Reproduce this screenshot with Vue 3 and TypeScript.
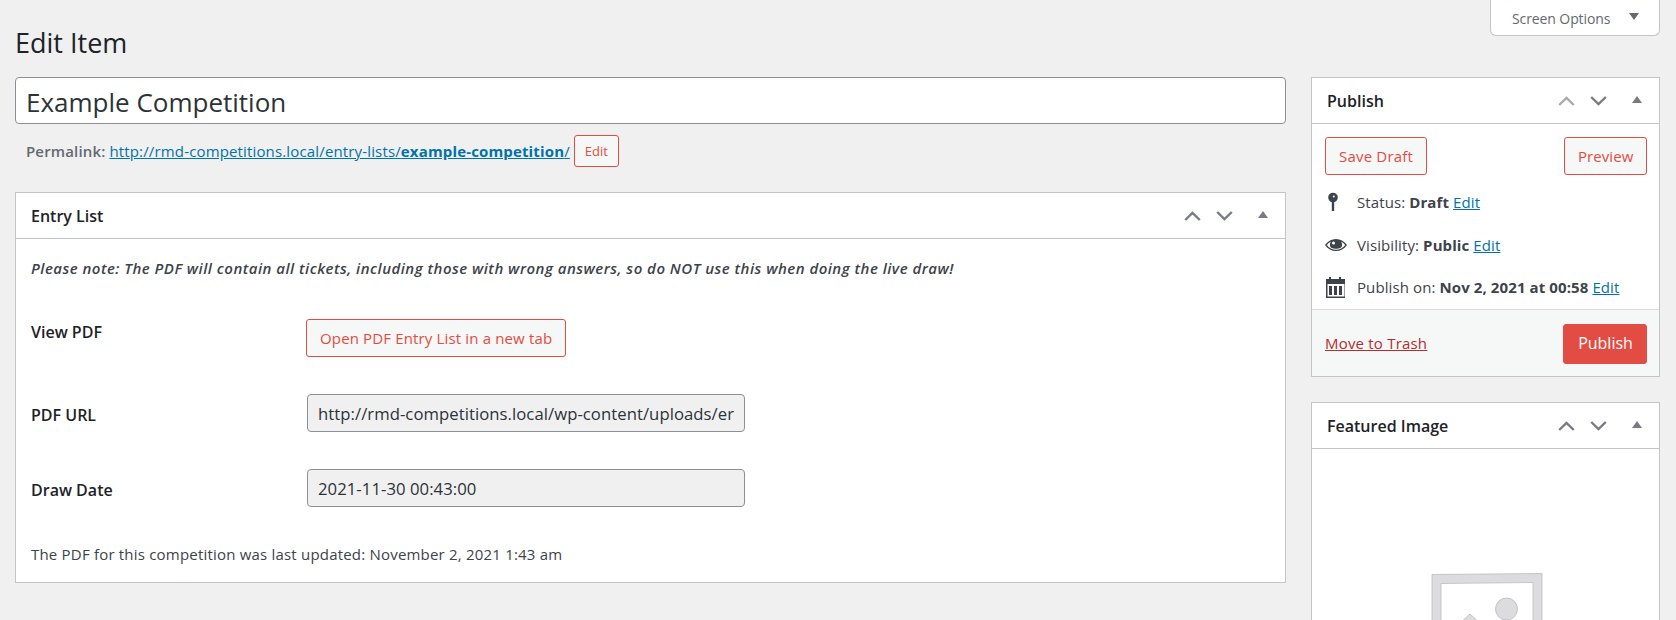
<script setup lang="ts">
const fields = [
  { label: 'PDF URL', value: 'http://rmd-competitions.local/wp-content/uploads/er' },
  { label: 'Draw Date', value: '2021-11-30 00:43:00' },
]
</script>

<template>
  <div class="page">
    <header class="top">
      <h1>Edit Item</h1>
      <div class="screen-tab">
        <span>Screen Options</span>
        <svg class="tri" width="10" height="7" viewBox="0 0 10 7"><path d="M0 0h10L5 7z" /></svg>
      </div>
    </header>
    <div class="columns">
      <main class="main">
        <div class="title-input">Example Competition</div>
        <div class="permalink">
          <strong>Permalink:</strong>
          <a href="#">http://rmd-competitions.local/entry-lists/<b>example-competition</b>/</a>
          <button class="btn small">Edit</button>
        </div>
        <section class="box entry">
          <div class="box-head">
            <h2>Entry List</h2>
            <div class="controls">
              <svg width="17" height="10" viewBox="0 0 17 10"><path class="chev" d="M1.2 9L8.5 2l7.3 7" /></svg>
              <svg width="17" height="10" viewBox="0 0 17 10"><path class="chev" d="M1.2 1l7.3 7 7.3-7" /></svg>
              <svg class="t" width="10" height="7" viewBox="0 0 10 7"><path d="M5 0l5 7H0z" /></svg>
            </div>
          </div>
          <div class="entry-body">
            <p class="note">Please note: The PDF will contain all tickets, including those with wrong answers, so do NOT use this when doing the live draw!</p>
            <div class="row first">
              <label class="view-label">View PDF</label>
              <button class="btn open">Open PDF Entry List in a new tab</button>
            </div>
            <div v-for="f in fields" :key="f.label" class="row">
              <label>{{ f.label }}</label>
              <div class="ro">{{ f.value }}</div>
            </div>
            <p class="updated">The PDF for this competition was last updated: November 2, 2021 1:43 am</p>
          </div>
        </section>
      </main>
      <aside class="side">
        <section class="box">
          <div class="box-head">
            <h2>Publish</h2>
            <div class="controls">
              <svg width="17" height="10" viewBox="0 0 17 10"><path class="chev off" d="M1.2 9L8.5 2l7.3 7" /></svg>
              <svg width="17" height="10" viewBox="0 0 17 10"><path class="chev" d="M1.2 1l7.3 7 7.3-7" /></svg>
              <svg class="t" width="10" height="7" viewBox="0 0 10 7"><path d="M5 0l5 7H0z" /></svg>
            </div>
          </div>
          <div class="pub-actions">
            <button class="btn">Save Draft</button>
            <button class="btn preview">Preview</button>
          </div>
          <div class="pub-line status">
            <svg class="ico" width="24" height="20" viewBox="0 0 24 20"><circle cx="8" cy="5.500" r="4.800" fill="#3c434a" /><circle cx="8.800" cy="4.500" r="1" fill="#fff" /><path d="M8 9v10" stroke="#3c434a" stroke-width="2.400" /></svg>
            <span>Status: <b>Draft</b> <a href="#">Edit</a></span>
          </div>
          <div class="pub-line vis">
            <svg class="ico" width="24" height="20" viewBox="0 0 24 20"><path fill-rule="evenodd" fill="#3c434a" d="M0 10C2.800 6 6.800 3.900 11 3.900S19.200 6 22 10c-2.800 4-6.800 6.100-11 6.100S2.800 14 0 10zm1.800 0c2.200 3 5.400 4.700 9.200 4.700s7-1.700 9.200-4.700c-1.200-1.500-2.600-2.700-4.200-3.500.7 1 1.100 2.100 1.100 3.300 0 3.300-2.700 4-6.100 4s-6.100-.7-6.100-4c0-1.200.4-2.300 1.100-3.300-1.600.8-3 2-4.200 3.500z" /><circle cx="8.500" cy="8" r="1.500" fill="#fff" /></svg>
            <span>Visibility: <b>Public</b> <a href="#">Edit</a></span>
          </div>
          <div class="pub-line date">
            <svg class="ico" width="24" height="22" viewBox="0 0 24 22"><path fill="#3c434a" fill-rule="evenodd" d="M1 3h3V1h2v2h8V1h2v2h4v19H1zm1.500 5v12.500h17V8z" /><path fill="#3c434a" d="M4 10h3v9H4zm5 0h3v9H9zm5 0h3v9h-3z" /></svg>
            <span>Publish on: <b>Nov 2, 2021 at 00:58</b> <a href="#">Edit</a></span>
          </div>
          <div class="pub-foot">
            <a class="trash" href="#">Move to Trash</a>
            <button class="btn primary">Publish</button>
          </div>
        </section>
        <section class="box featured">
          <div class="box-head">
            <h2>Featured Image</h2>
            <div class="controls">
              <svg width="17" height="10" viewBox="0 0 17 10"><path class="chev" d="M1.2 9L8.5 2l7.3 7" /></svg>
              <svg width="17" height="10" viewBox="0 0 17 10"><path class="chev" d="M1.2 1l7.3 7 7.3-7" /></svg>
              <svg class="t" width="10" height="7" viewBox="0 0 10 7"><path d="M5 0l5 7H0z" /></svg>
            </div>
          </div>
          <div class="feat-body">
            <svg width="112" height="60" viewBox="0 0 112 60"><path fill="#dcdcde" stroke="#b4b5b8" stroke-width=".7" fill-rule="evenodd" d="M1 1.500L111 .5V60H1zM10 10.500V60h92V9.500z" /><circle cx="75.500" cy="36" r="11" fill="#dcdcde" stroke="#b4b5b8" stroke-width=".7" /><path fill="#dcdcde" stroke="#b4b5b8" stroke-width=".7" d="M18 60l21-19 21 19z" /></svg>
          </div>
        </section>
      </aside>
    </div>
  </div>
</template>

<style>
html, body { margin: 0; background: #f0f0f1; overflow: hidden; }
</style>

<style scoped>
.page {
  height: 620px;
  overflow: hidden;
  padding: 0 16px 0 15px;
  box-sizing: border-box;
  background: #f0f0f1;
  color: #3c434a;
  font: 15px/1.4 "Open Sans", "Noto Sans", sans-serif;
  letter-spacing: 0.2px;
}
.top { display: flex; justify-content: space-between; align-items: flex-start; height: 77px; }
h1 { margin: 26px 0 0; font-size: 27px; line-height: 34px; font-weight: 400; color: #1d2327; letter-spacing: 0; }
.screen-tab {
  width: 170px; height: 36px; box-sizing: border-box;
  display: flex; align-items: center; gap: 19px; padding: 2px 0 0 21px;
  background: #fff; border: 1px solid #c3c4c7; border-top: 0; border-radius: 0 0 6px 6px;
  color: #646970; font-size: 14px; letter-spacing: -0.1px;
}
.tri { fill: #646970; margin-top: -5px; }
.columns { display: flex; gap: 25px; align-items: flex-start; }
.main { flex: 1; min-width: 0; }
.side { width: 349px; flex: none; display: flex; flex-direction: column; gap: 25px; }
.title-input {
  height: 47px; box-sizing: border-box; padding: 3px 10px 0;
  display: flex; align-items: center;
  background: #fff; border: 1px solid #8c8f94; border-radius: 4px;
  color: #2c3338; font-size: 26px; letter-spacing: 0;
}
.permalink { display: flex; align-items: center; height: 32px; margin: 11px 0 25px; padding-left: 11px; color: #646970; white-space: pre; letter-spacing: 0.15px; }
.permalink strong { margin-right: 4px; font-weight: 600; }
.permalink a b { font-weight: 700; }
a { color: #0073aa; text-decoration: underline; }
.btn {
  font: inherit; letter-spacing: inherit; white-space: nowrap;
  color: #e34c42; background: #f6f7f7; border: 1px solid #e34c42; border-radius: 3px;
  padding: 0 13px; height: 38px; cursor: pointer; box-sizing: border-box;
}
.btn.small { height: 32px; padding: 0 10px; margin-left: 4px; font-size: 13px; letter-spacing: 0; }
.btn.open { margin-left: -1px; letter-spacing: 0.15px; }
.btn.preview { padding: 0 12.500px; letter-spacing: 0.1px; }
.btn.primary { background: #e34c42; color: #fff; width: 84px; height: 40px; padding: 0 0 0 1px; font-size: 16px; letter-spacing: 0; }
.box { background: #fff; border: 1px solid #c3c4c7; box-sizing: border-box; }
.box-head { height: 46px; box-sizing: border-box; display: flex; align-items: center; justify-content: space-between; border-bottom: 1px solid #c3c4c7; padding: 1px 17px 0 15px; }
h2 { margin: 0; font-size: 16px; font-weight: 600; color: #1d2327; letter-spacing: 0; }
.controls { display: flex; align-items: center; gap: 15px; }
.controls .t { margin-left: 10px; fill: #787c82; margin-top: -4px; }
.chev { fill: none; stroke: #787c82; stroke-width: 2.400; }
.chev.off { stroke: #a7aaad; }
.entry { height: 391px; }
.entry-body { padding: 0 15px; }
.note { margin: 0; padding-top: 19px; height: 58px; box-sizing: border-box; font-weight: 600; font-style: italic; line-height: 20px; letter-spacing: 0.48px; }
.row { display: flex; align-items: center; height: 38px; margin-bottom: 37px; }
.row.first { margin-top: 22px; margin-bottom: 37px; }
.row label { width: 276px; flex: none; font-size: 16px; font-weight: 600; color: #1d2327; padding-top: 5px; letter-spacing: 0; }
.row .view-label { padding: 0 0 11px; }
.ro {
  width: 438px; height: 38px; box-sizing: border-box; padding: 2px 10px 0;
  display: flex; align-items: center; overflow: hidden; white-space: nowrap;
  background: #f0f0f1; border: 1px solid #8c8f94; border-radius: 4px; color: #2c3338; font-size: 16.700px; letter-spacing: 0.05px;
}
.updated { margin: 1px 0 0; line-height: 20px; }
.pub-actions { display: flex; justify-content: space-between; padding: 13px 12px 0 13px; }
.pub-line { display: flex; align-items: center; padding-left: 13px; height: 24px; white-space: pre; letter-spacing: 0.1px; }
.pub-line .ico { margin-right: 8px; flex: none; }
.status { margin-top: 15px; }
.vis { margin-top: 19px; }
.date { margin-top: 18px; }
.pub-foot { display: flex; justify-content: space-between; align-items: center; height: 67px; margin-top: 10px; box-sizing: border-box; padding: 1px 12px 0 13px; background: #f6f7f7; border-top: 1px solid #dcdcde; letter-spacing: 0.2px; }
.trash { color: #b32d2e; }
.feat-body { height: 200px; display: flex; justify-content: center; padding: 124px 0 0 3px; box-sizing: border-box; }
</style>
